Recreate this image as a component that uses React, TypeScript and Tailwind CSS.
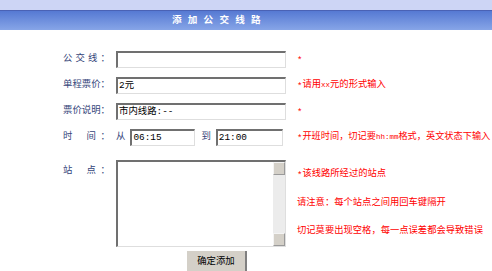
import React from "react";

const FONT = "font-['Liberation_Mono','Noto_Sans_CJK_SC',monospace]";

function Label({ chars }: { chars: string[] }) {
  return (
    <div className="w-[110px] flex justify-end shrink-0">
      <div className="w-[47px] flex justify-between text-[#34457a] text-[9.4px] leading-[12px]">
        {chars.map((c, i) => (
          <span key={i}>{c}</span>
        ))}
      </div>
    </div>
  );
}

function Input({ value, w }: { value?: string; w: string }) {
  return (
    <div
      className={`${w} h-[17px] box-border bg-white border-t-2 border-l-2 border-t-[#707070] border-l-[#707070] border-b border-r border-b-[#dedede] border-r-[#dedede] flex items-center pl-[1px] text-[9.4px] leading-[12px] text-black whitespace-nowrap overflow-hidden`}
    >
      {value}
    </div>
  );
}

function Star() {
  return <span className="inline-block translate-y-[2px] text-[9px]">*</span>;
}

function Small({ children }: { children: React.ReactNode }) {
  return <span className="text-[7.5px]">{children}</span>;
}

export default function App() {
  return (
    <div className={`w-[492px] h-[271px] overflow-hidden bg-white ${FONT}`}>
      <div className="h-[10px] bg-[#cdd5f5]" />
      <div className="h-[20px] border-t border-[#4a62b5] bg-gradient-to-b from-[#5679d3] to-[#87a5e7] flex items-center pl-[172px]">
        <span className="text-white font-bold text-[9.6px] tracking-[6.2px] leading-none">添加公交线路</span>
      </div>

      <div className="pt-[16px]">
        <div className="flex h-[26px] items-center">
          <Label chars={["公", "交", "线", "："]} />
          <div className="ml-[6px]">
            <Input w="w-[170px]" />
          </div>
          <div className="ml-[11px] text-[#ff0000] text-[9.3px] leading-[12px]">
            <Star />
          </div>
        </div>

        <div className="flex h-[26px] items-center">
          <Label chars={["单", "程", "票", "价", "："]} />
          <div className="ml-[6px]">
            <Input w="w-[170px]" value="2元" />
          </div>
          <div className="ml-[11px] text-[#ff0000] text-[9.3px] leading-[12px] whitespace-nowrap">
            <Star />请用<Small>xx</Small>元的形式输入
          </div>
        </div>

        <div className="flex h-[26px] items-center">
          <Label chars={["票", "价", "说", "明", "："]} />
          <div className="ml-[6px]">
            <Input w="w-[170px]" value="市内线路:--" />
          </div>
          <div className="ml-[11px] text-[#ff0000] text-[9.3px] leading-[12px]">
            <Star />
          </div>
        </div>

        <div className="flex h-[26px] items-center">
          <Label chars={["时", "", "", "间", "："]} />
          <div className="ml-[6px] flex items-center w-[170px] text-[#34457a] text-[9.4px] leading-[12px]">
            <span>从</span>
            <div className="ml-[5px]">
              <Input w="w-[65px]" value="06:15" />
            </div>
            <span className="ml-[6px]">到</span>
            <div className="ml-[5px]">
              <Input w="w-[67px]" value="21:00" />
            </div>
          </div>
          <div className="ml-[11px] text-[#ff0000] text-[9.2px] leading-[12px] whitespace-nowrap">
            <Star />开班时间，切记要<Small>hh:mm</Small>格式，英文状态下输入
          </div>
        </div>

        <div className="flex items-start mt-[10px]">
          <div className="pt-[5px]">
            <Label chars={["站", "", "", "点", "："]} />
          </div>
          <div className="ml-[6px] w-[170px] h-[87px] box-border bg-white border-t-2 border-l-2 border-t-[#707070] border-l-[#707070] border-b border-r border-b-[#dedede] border-r-[#dedede] flex">
            <div className="flex-1" />
            <div className="w-[12px] flex flex-col bg-[#ececec]">
              <div className="h-[13px] bg-[#d4d0c8] border border-t-[#f4f4f4] border-l-[#f4f4f4] border-b-[#9a9a9a] border-r-[#9a9a9a]" />
              <div className="flex-1" />
              <div className="h-[13px] bg-[#d4d0c8] border border-t-[#f4f4f4] border-l-[#f4f4f4] border-b-[#9a9a9a] border-r-[#9a9a9a]" />
            </div>
          </div>
          <div className="ml-[11px] pt-[8px] flex flex-col gap-[16.5px] text-[#ff0000] text-[9.3px] leading-[12px] whitespace-nowrap">
            <div>
              <Star />该线路所经过的站点
            </div>
            <div>请注意：每个站点之间用回车键隔开</div>
            <div>切记莫要出现空格，每一点误差都会导致错误</div>
          </div>
        </div>

        <div className="mt-[4px] ml-[187px] w-[60px] h-[22px] box-border bg-[#d4d0c8] border-r-2 border-r-[#808080] flex items-center justify-center text-black text-[9.4px] leading-[12px]">
          确定添加
        </div>
      </div>
    </div>
  );
}
